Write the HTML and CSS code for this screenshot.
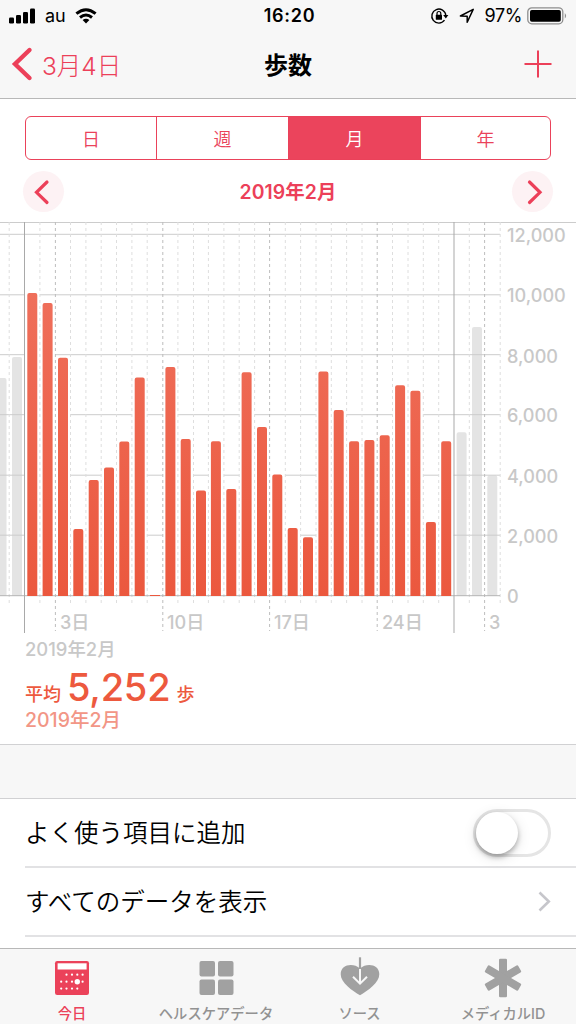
FILE: index.html
```html
<!DOCTYPE html>
<html lang="ja">
<head>
<meta charset="utf-8">
<title>歩数</title>
<link rel="stylesheet" href="styles.css">
</head>
<body>
<header class="top">
  <div class="status">
    <div class="status-left">
      <svg width="27" height="16" viewBox="0 0 27 16"><rect x="0" y="9.500" width="5" height="6" rx="1.3"/><rect x="7" y="7" width="5" height="8.500" rx="1.3"/><rect x="14" y="4" width="5" height="11.500" rx="1.3"/><rect x="21" y=".5" width="5" height="15" rx="1.3"/></svg>
      <span class="carrier">au</span>
      <svg width="22" height="16" viewBox="0 0 22 16"><g fill="none" stroke="#000" stroke-width="3"><path d="M1.400 5.700Q11-2.300 20.600 5.700"/><path d="M5 9.500Q11 4.600 17 9.500"/></g><path d="M7.600 12Q11 9.400 14.400 12L11 15.500Z"/></svg>
    </div>
    <div class="clock">16:20</div>
    <div class="status-right">
      <svg width="18" height="16" viewBox="0 0 18 16"><path d="M13.500 12.200A7 7 0 1 1 14.800 7.500" fill="none" stroke="#000" stroke-width="1.400"/><path d="M12.200 7h5.200l-2.600 3.400z"/><rect x="4.800" y="6.800" width="6.200" height="5" rx=".6"/><path d="M6 7V5.400a1.900 1.900 0 0 1 3.800 0V7" fill="none" stroke="#000" stroke-width="1.200"/></svg>
      <svg class="locate" width="16" height="16" viewBox="0 0 16 16"><path d="M1.400 8 14.200 1.400 8.200 14.200V8.300Z" fill="none" stroke="#000" stroke-width="1.500" stroke-linejoin="round"/></svg>
      <span class="percent">97%</span>
      <svg width="41" height="18" viewBox="0 0 41 18"><rect x=".8" y=".8" width="35" height="16" rx="4" fill="none" stroke="#8e8e8e" stroke-width="1.300"/><rect x="3" y="3" width="30.800" height="11.700" rx="1.800"/><path d="M37.800 6q2.600 2.800 0 5.600z" fill="#8e8e8e"/></svg>
    </div>
  </div>
  <nav class="nav">
    <a class="back"><svg width="21" height="34" viewBox="0 0 21 34"><path d="M18.500 3 4 17 18.500 31" fill="none" stroke="#ec4059" stroke-width="4.400" stroke-linecap="round"/></svg><span>3月4日</span></a>
    <h1 class="title">歩数</h1>
    <svg class="add" width="28" height="28" viewBox="0 0 28 28"><path d="M.5 14h27M14 .5v27" stroke="#ec4059" stroke-width="2"/></svg>
  </nav>
</header>
<main class="content">
  <div class="segments"><span>日</span><span>週</span><span class="on">月</span><span>年</span></div>
  <div class="period">
    <span class="round"><svg width="41" height="41" viewBox="0 0 41 41"><path d="M24 11 13.500 21.300 24 31.500"/></svg></span>
    <strong>2019年2月</strong>
    <span class="round"><svg width="41" height="41" viewBox="0 0 41 41"><path d="M17.500 11 28 21.300 17.500 31.500"/></svg></span>
  </div>
  <svg class="chart" width="576" height="412" viewBox="0 222 576 412">
    <defs>
      <linearGradient id="steps" gradientUnits="userSpaceOnUse" x1="0" y1="290" x2="0" y2="596"><stop offset="0" stop-color="#ef6f5b"/><stop offset="1" stop-color="#eb583e"/></linearGradient>
    </defs>
    <path class="edge" d="M0 222.500H576"/>
    <g class="past">
      <path d="M-4 596V380q0-2 2-2H4.500q2 0 2 2V596zM12 596V359q0-2 2-2h6q2 0 2 2V596z"/>
      <path d="M456.600 596V434.300q0-2 2-2h6q2 0 2 2V596zM472 596V329q0-2 2-2h6q2 0 2 2V596zM487.300 596V477.500q0-2 2-2h6q2 0 2 2V596z"/>
    </g>
    <path class="grid" d="M0 234.300H500M0 294.800H500M0 354.700H500M0 414.700H500M0 475.200H500M0 535.200H500"/>
    <!-- white backing clears the grid behind each day of the month -->
    <path class="clear" d="M25 595V292H39.900V302H55.200V356.500H70.500V528H85.900V479H101.200V466.500H116.500V440.500H131.900V376H147.200V594H162.600V366H177.900V438H193.200V489.500H208.600V440.300H223.900V488H239.300V371H254.600V426H269.900V473.500H285.300V527H300.600V536H316V370.500H331.300V409H346.600V440.300H362V439H377.300V434H392.700V384.300H408V390H423.300V521H438.700V440.300H453.500V595z"/>
    <path class="minor" d="M9.200 222V606M39.900 222V606M70.500 222V606M85.900 222V606M101.200 222V606M116.500 222V606M131.900 222V606M147.200 222V606M177.900 222V606M193.500 222V606M208.400 222V606M223.900 222V606M239.200 222V606M254.600 222V606M285.300 222V606M300.600 222V606M316 222V606M331.300 222V606M346.600 222V606M362 222V606M392.500 222V606M408 222V606M423.300 222V606M438.700 222V606M469.300 222V606M500.200 222V606"/>
    <path class="major" d="M55.400 222V631M162.800 222V631M269.600 222V631M377.200 222V631M484.600 222V631"/>
    <path class="axis" d="M0 595.700H500"/>
    <path class="month" d="M24.500 222V633M454 222V633"/>
    <g fill="url(#steps)">
      <path d="M27.300 596V295q0-2 2-2h6q2 0 2 2V596zM42.600 596V305q0-2 2-2h6q2 0 2 2V596zM58 596V359.700q0-2 2-2h6q2 0 2 2V596zM73.300 596V531q0-2 2-2h6q2 0 2 2V596zM88.700 596V482q0-2 2-2h6q2 0 2 2V596zM104 596V469.500q0-2 2-2h6q2 0 2 2V596zM119.300 596V443.500q0-2 2-2h6q2 0 2 2V596zM134.700 596V379.500q0-2 2-2h6q2 0 2 2V596z"/>
      <path d="M150 595h10v1h-10z"/>
      <path d="M165.400 596V369q0-2 2-2h6q2 0 2 2V596zM180.700 596V441q0-2 2-2h6q2 0 2 2V596zM196 596V492.500q0-2 2-2h6q2 0 2 2V596zM210.900 596V443.300q0-2 2-2h6q2 0 2 2V596zM226.300 596V491q0-2 2-2h6q2 0 2 2V596zM241.600 596V374.200q0-2 2-2h6q2 0 2 2V596zM257 596V429q0-2 2-2h6q2 0 2 2V596zM272.300 596V476.500q0-2 2-2h6q2 0 2 2V596z"/>
      <path d="M287.700 596V530q0-2 2-2h6q2 0 2 2V596zM303 596V539.200q0-2 2-2h6q2 0 2 2V596zM318.400 596V373.500q0-2 2-2h6q2 0 2 2V596zM333.700 596V412q0-2 2-2h6q2 0 2 2V596zM349.100 596V443.300q0-2 2-2h6q2 0 2 2V596zM364.400 596V442q0-2 2-2h6q2 0 2 2V596z"/>
      <path d="M379.700 596V437.200q0-2 2-2h6q2 0 2 2V596zM395.100 596V387.300q0-2 2-2h6q2 0 2 2V596zM410.400 596V392.800q0-2 2-2h6q2 0 2 2V596zM425.900 596V524q0-2 2-2h6q2 0 2 2V596zM441.200 596V443.300q0-2 2-2h6q2 0 2 2V596z"/>
    </g>
    <g class="ticks">
      <text x="507" y="241.700">12,000</text><text x="507" y="302.200">10,000</text><text x="507" y="362.500">8,000</text><text x="507" y="422.200">6,000</text><text x="507" y="482.700">4,000</text><text x="507" y="542.700">2,000</text><text x="507" y="603">0</text>
      <text x="60" y="628.500">3日</text><text x="167" y="628.500">10日</text><text x="274" y="628.500">17日</text><text x="382" y="628.500">24日</text><text x="489" y="628.500">3</text>
    </g>
  </svg>
  <div class="range">2019年2月</div>
  <div class="average"><span>平均</span><b>5,252</b><span>歩</span></div>
  <div class="average-date">2019年2月</div>
</main>
<div class="spacer"></div>
<section class="list">
  <div class="row"><span class="label">よく使う項目に追加</span><span class="switch"><i></i></span></div>
  <div class="row"><span class="label">すべてのデータを表示</span><svg width="13" height="21" viewBox="0 0 13 21"><path d="M1.500 1.500 10.800 10.500 1.500 19.500" fill="none" stroke="#c6c6cb" stroke-width="2.600"/></svg></div>
</section>
<footer class="tabs">
  <div class="tab active">
    <svg width="40" height="40" viewBox="0 0 40 40"><rect x="3" y="3" width="34" height="34" rx="2.200"/><path fill="#fff" d="M5.600 5.300h29v6.200h-29z"/><g fill="#fff"><circle cx="14.500" cy="16.700" r="1.100"/><circle cx="20" cy="16.700" r="1.100"/><circle cx="25.300" cy="16.700" r="1.100"/><circle cx="30.600" cy="16.700" r="1.100"/><circle cx="9.200" cy="23.700" r="1.100"/><circle cx="14.500" cy="23.700" r="1.100"/><circle cx="20" cy="23.700" r="1.100"/><circle cx="25.300" cy="23.700" r="2.700"/><circle cx="30.600" cy="23.700" r="1.100"/><circle cx="9.200" cy="30.600" r="1.100"/><circle cx="14.500" cy="30.600" r="1.100"/><circle cx="20" cy="30.600" r="1.100"/><circle cx="25.300" cy="30.600" r="1.100"/></g></svg>
    <span>今日</span>
  </div>
  <div class="tab">
    <svg width="40" height="40" viewBox="0 0 40 40"><rect x="3.500" y="3" width="15.500" height="15.500" rx="2"/><rect x="22" y="3" width="15.500" height="15.500" rx="2"/><rect x="3.500" y="21.500" width="15.500" height="15.500" rx="2"/><rect x="22" y="21.500" width="15.500" height="15.500" rx="2"/></svg>
    <span>ヘルスケアデータ</span>
  </div>
  <div class="tab">
    <svg width="40" height="40" viewBox="0 0 40 40"><path d="M20 37.300C12.500 32.500.7 25 .7 16.200.7 6.500 13 4.500 20 10.500 27 4.500 39.300 6.500 39.300 16.200 39.300 25 27.500 32.500 20 37.300Z"/><path d="M20 10.500V25M13 18.700l7 7 7-7" fill="none" stroke="#f7f7f7" stroke-width="2"/><path d="M18.900 -.7h2.200V11h-2.200z"/></svg>
    <span>ソース</span>
  </div>
  <div class="tab">
    <svg width="40" height="40" viewBox="0 0 40 40"><rect x="16" y=".8" width="8" height="38.400" rx="1.300"/><rect x="16" y=".8" width="8" height="38.400" rx="1.300" transform="rotate(60 20 20)"/><rect x="16" y=".8" width="8" height="38.400" rx="1.300" transform="rotate(120 20 20)"/></svg>
    <span>メディカルID</span>
  </div>
</footer>
</body>
</html>
```
FILE: styles.css
```css
* { box-sizing: border-box; }
body {
  margin: 0;
  width: 576px;
  height: 1024px;
  overflow: hidden;
  display: flex;
  flex-direction: column;
  background: #fff;
  color: #000;
  font-family: Inter, "Noto Sans CJK JP", sans-serif;
}
svg { display: block; flex: none; overflow: visible; }
.top { height: 99px; background: #f7f7f7; border-bottom: 1px solid #b8b8b8; }
.status, .nav { display: grid; grid-template-columns: 1fr auto 1fr; align-items: center; }
.status { height: 31px; padding: 0 8px 0 9px; }
.status-left, .status-right { display: flex; align-items: center; }
.status-left { gap: 9px; }
.status-right { justify-content: flex-end; }
.carrier { font-size: 18px; }
.clock { font-size: 18px; font-weight: 600; letter-spacing: .7px; margin-left: 2px; }
.locate { margin: 0 10px 0 10px; }
.percent { font-size: 18px; letter-spacing: -.4px; margin-right: 5px; }
.nav { height: 66px; padding: 0 24px 0 11px; }
.back { display: flex; align-items: center; gap: 10px; color: #ec4059; font-size: 24.5px; font-weight: 300; }
.title { margin: 0 0 2px 13px; font-size: 24px; font-weight: 700; }
.add { justify-self: end; }
.content { height: 645px; padding-top: 17px; background: #fff; }
.segments {
  display: grid;
  grid-template-columns: 130px 132px 132px 130px;
  height: 44px;
  margin: 0 25px;
  border: 1px solid #ea425a;
  border-radius: 6px;
  overflow: hidden;
}
.segments span {
  display: flex;
  align-items: center;
  justify-content: center;
  color: #ea425a;
  font-size: 18px;
  font-weight: 350;
}
.segments span + span { border-left: 1px solid #ea425a; }
.segments .on { background: #eb445c; color: #fff; }
.period { display: flex; align-items: center; justify-content: space-between; height: 62px; padding: 0 23px; color: #ec4059; }
.period strong { padding-bottom: 2px; font-size: 19.4px; font-weight: 600; letter-spacing: .1px; }
.round { border-radius: 50%; background: #fdf2f4; }
.round path { fill: none; stroke: #ec4059; stroke-width: 3.2; stroke-linecap: round; }
.chart { overflow: hidden; }
.chart path { stroke-width: 1; }
.edge { stroke: #ccc; }
.past { fill: #e4e4e4; }
.grid { stroke: #ccc; }
.clear { fill: #fff; }
.minor { stroke: #dedede; stroke-dasharray: 3 3; }
.major { stroke: #bdbdbd; stroke-dasharray: 3 3; }
.axis { stroke: #b5b5b5; }
.month { stroke: #a9a9a9; }
.ticks { fill: #c8c8c8; font-size: 18.1px; font-weight: 450; }
.range { height: 31px; padding-left: 25px; color: #c8c8c8; font-size: 18.4px; font-weight: 450; line-height: 31px; }
.average { display: flex; align-items: baseline; height: 45px; padding-left: 25px; color: #ed593e; font-size: 18px; font-weight: 500; line-height: 45px; }
.average b { margin: 0 6px 0 6px; font-size: 38px; font-weight: 500; letter-spacing: -.2px; }
.average-date { padding-left: 25px; color: #f29686; font-size: 19.5px; font-weight: 500; line-height: 20px; }
.spacer { height: 55px; background: #f7f7f7; border: solid #d1d1d3; border-width: 1px 0; }
.list { height: 149px; padding-left: 25px; }
.row { display: flex; align-items: center; justify-content: space-between; height: 69px; padding-right: 25px; border-bottom: 2px solid #e2e2e4; }
.label { padding-bottom: 3px; font-size: 24.5px; font-weight: 350; }
.switch { width: 78px; height: 48px; border: 3px solid #e5e5e5; border-radius: 24px; }
.switch i { display: block; width: 42px; height: 42px; border-radius: 50%; background: #fff; box-shadow: 0 3px 5px rgba(0,0,0,.28), 0 3px 14px rgba(0,0,0,.13); }
.tabs { display: grid; grid-template-columns: 144px 144px 143px 144px; height: 76px; background: #f7f7f7; border-top: 1px solid #b8b8b8; }
.tab { display: flex; flex-direction: column; align-items: center; padding-top: 9px; fill: #a1a1a1; color: #929292; font-size: 14.3px; font-weight: 500; }
.tab span { margin-top: 6px; line-height: 20px; white-space: nowrap; }
.tab.active { fill: #eb425a; color: #eb425a; }
```
